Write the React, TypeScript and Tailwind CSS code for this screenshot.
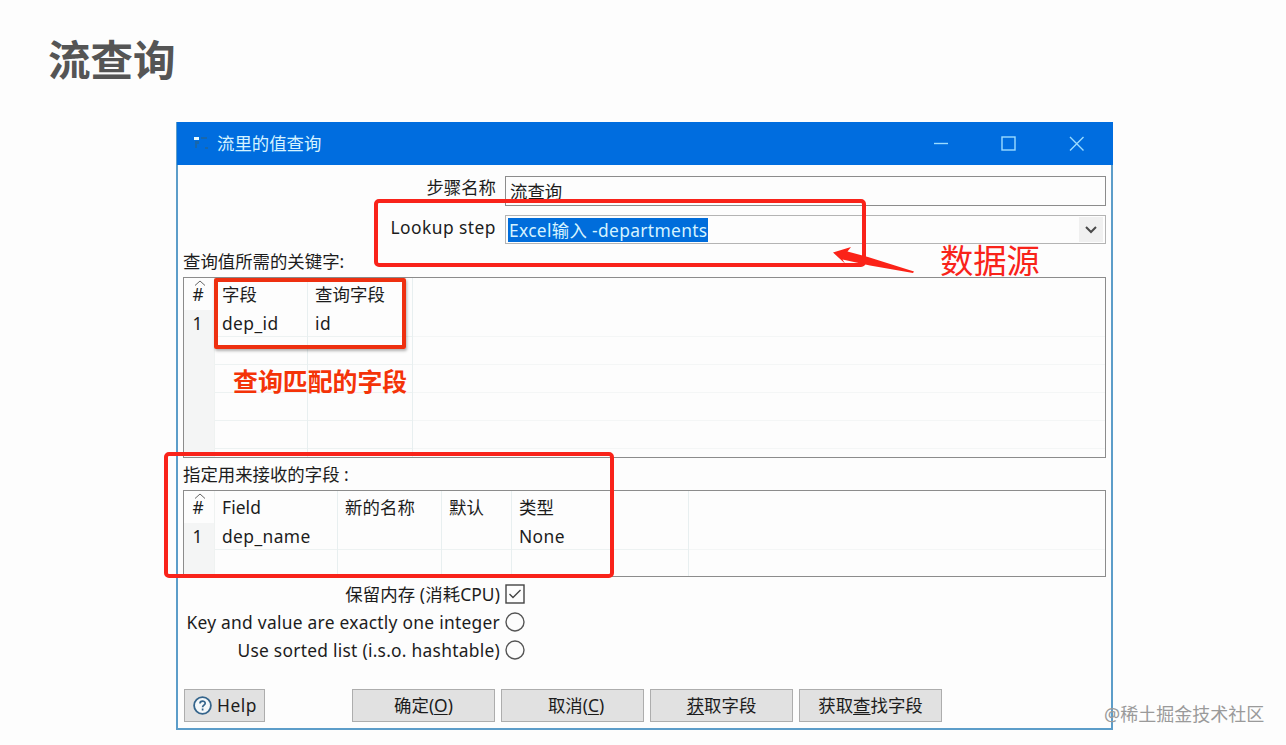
import type { ReactNode } from 'react';

interface Column {
  title: string;
  value: string;
  width: string;
}

const keyColumns: Column[] = [
  { title: '字段', value: 'dep_id', width: 'w-[93px]' },
  { title: '查询字段', value: 'id', width: 'w-[105px]' },
];

const valueColumns: Column[] = [
  { title: 'Field', value: 'dep_name', width: 'w-[123px]' },
  { title: '新的名称', value: '', width: 'w-[104px]' },
  { title: '默认', value: '', width: 'w-[70px]' },
  { title: '类型', value: 'None', width: 'w-[177px]' },
];

function GridTable({ columns, blankRows, className }: { columns: Column[]; blankRows: number; className: string }) {
  return (
    <div className={`flex w-[923px] overflow-hidden border border-[#8c8c8c] ${className}`}>
      <div className="relative w-[31px] shrink-0 border-r border-[#eff2f1] bg-[linear-gradient(#fdfdfd_32px,#f4f5f5_32px)] text-center">
        <svg className="absolute top-[2px] left-[10px] h-[6px] w-[12px]" viewBox="0 0 12 6" fill="none" stroke="#666" strokeWidth="1">
          <path d="M1 5.5L6 1L11 5.5" />
        </svg>
        <div className="h-[30px] pt-[3px] pr-[2px] leading-[27px]">#</div>
        <div className="h-[29px] pr-[3px] leading-[31px]">1</div>
      </div>
      {columns.map((col) => (
        <div key={col.title} className={`shrink-0 border-r border-[#e8eff0] ${col.width}`}>
          <div className="h-[30px] pt-[3px] pl-[7px] leading-[27px] tracking-[0.1px]">{col.title}</div>
          <div className="h-[29px] border-b border-[#edf2f2] pl-[7px] leading-[31px] tracking-[0.4px]">{col.value}</div>
          {Array.from({ length: blankRows }, (_, i) => (
            <div key={i} className="h-[28px] border-b border-[#edf2f2]" />
          ))}
        </div>
      ))}
      <div className="flex-1">
        <div className="h-[59px] border-b border-[#f4f6f6]" />
        {Array.from({ length: blankRows }, (_, i) => (
          <div key={i} className="h-[28px] border-b border-[#f4f6f6]" />
        ))}
      </div>
    </div>
  );
}

function DialogButton({ children }: { children: ReactNode }) {
  return (
    <button className="h-[33px] w-[143px] border border-[#adadad] bg-[#e1e1e1] leading-[31px] underline-offset-2">{children}</button>
  );
}

export default function App() {
  return (
    <div className="relative h-[745px] w-[1286px] overflow-hidden bg-[#fdfdfd] font-['Noto_Sans','Noto_Sans_CJK_SC',sans-serif] text-[17.4px] text-[#1c1c1c]">
      <h1 className="h-[122px] pt-[29px] pl-[48px] text-[42.5px] leading-[62px] font-bold text-[#555]">流查询</h1>

      <div className="ml-[176px] h-[608px] w-[937px] border-x-2 border-b-2 border-[#5c9dc9]">
        <div className="-mr-[2px] -ml-px flex h-[43px] items-center bg-[#006ddf] text-[#d5f3ff]">
          <svg className="ml-[16px] h-[18px] w-[18px]" viewBox="0 0 18 18">
            <rect x="1" y="2" width="5" height="3" fill="#e8fbff" />
            <path d="M2 6h4v3H4v4H2zM8 2h6v2H8zM12 12h3v2h-3z" fill="#1767ad" />
          </svg>
          <span className="ml-[6px] flex-1">流里的值查询</span>
          <svg className="mr-[28px] mb-[2px] h-[16px] w-[152px]" viewBox="0 0 152 16" fill="none" stroke="#9bdcff" strokeWidth="1.4">
            <path d="M1 8.500H15" />
            <rect x="69" y="2" width="13" height="13" />
            <path d="M137 2L150.500 15.500M150.500 2L137 15.500" />
          </svg>
        </div>

        <div className="flex h-[50px] pt-[11px]">
          <span className="w-[318px] text-right leading-[23px]">步骤名称</span>
          <div className="ml-[9px] h-[30px] w-[601px] border border-[#8c8c8c] pl-[4px] leading-[29px]">流查询</div>
        </div>
        <div className="flex h-[34px]">
          <span className="w-[318px] text-right leading-[25px] tracking-[0.45px]">Lookup step</span>
          <div className="ml-[9px] flex h-[29px] w-[601px] items-center justify-between border border-[#b4b4b4] px-[2px]">
            <span className="h-[24px] w-[200px] bg-[#006ddb] pl-[1px] leading-[24px] tracking-[0.33px] whitespace-nowrap text-[#d5f3ff]">Excel输入 -departments</span>
            <div className="flex h-[25px] w-[24px] items-center justify-center bg-[#f0f0f0]">
              <svg className="h-[8px] w-[12px]" viewBox="0 0 12 8" fill="none" stroke="#4a4a4a" strokeWidth="2">
                <path d="M1 1L6 6L11 1" />
              </svg>
            </div>
          </div>
        </div>

        <div className="h-[28px] pl-[5px] leading-[24px]">查询值所需的关键字:</div>
        <GridTable columns={keyColumns} blankRows={4} className="ml-[5px] h-[181px]" />
        <div className="h-[32px] pl-[5px] leading-[33px]">指定用来接收的字段 :</div>
        <GridTable columns={valueColumns} blankRows={0} className="ml-[5px] h-[87px]" />

        <div className="mt-[3px] w-[347px]">
          <div className="flex h-[28px] items-center justify-end gap-[5px]">
            <span className="tracking-[0.1px]">保留内存 (消耗CPU)</span>
            <svg className="h-[20px] w-[20px]" viewBox="0 0 20 20" fill="none" stroke="#444" strokeWidth="1.4">
              <rect x="1" y="1" width="18" height="18" />
              <path d="M4.500 10L8 13.500L15.500 6" />
            </svg>
          </div>
          {['Key and value are exactly one integer', 'Use sorted list (i.s.o. hashtable)'].map((label) => (
            <div key={label} className="flex h-[28px] items-center justify-end gap-[5px] tracking-[0.26px] whitespace-nowrap">
              <span>{label}</span>
              <svg className="h-[20px] w-[20px] shrink-0" viewBox="0 0 20 20" fill="none" stroke="#555" strokeWidth="1.4">
                <circle cx="10" cy="10" r="9" />
              </svg>
            </div>
          ))}
        </div>

        <div className="mt-[25px] flex gap-[6px] pl-[6px]">
          <button className="mr-[81px] flex h-[33px] w-[81px] items-center border border-[#adadad] bg-[#e1e1e1] pl-[8px]">
            <svg className="h-[19px] w-[19px] shrink-0" viewBox="0 0 19 19" fill="none" stroke="#35658c">
              <circle cx="9.500" cy="9.500" r="8.400" fill="#f4f8fa" strokeWidth="1.8" />
              <path d="M7 7.500C7 4.200 12.200 4.400 12.200 7.200C12.200 9 9.600 9.200 9.600 11.200M9.600 12.600V14.400" strokeWidth="1.7" />
            </svg>
            <span className="ml-[5px] tracking-[0.5px]">Help</span>
          </button>
          <DialogButton>确定(<u>O</u>)</DialogButton>
          <DialogButton><span className="pl-[7px]">取消(<u>C</u>)</span></DialogButton>
          <DialogButton><u>获</u>取字段</DialogButton>
          <DialogButton>获取<u>查</u>找字段</DialogButton>
        </div>
      </div>

      {/* red annotations on top of the dialog */}
      <div className="absolute top-[199px] left-[374px] h-[68px] w-[492px] rounded-[5px] border-4 border-[#f9231a]" />
      <div className="absolute top-[278px] left-[214px] h-[71px] w-[192px] rounded-[2px] border-4 border-[#ee3010] shadow-[1px_2px_3px_rgba(0,0,0,0.3)]" />
      <div className="absolute top-[452px] left-[164px] h-[126px] w-[450px] rounded-[5px] border-4 border-[#f9231a]" />
      <svg className="absolute top-[245px] left-[832px] h-[30px] w-[84px]" viewBox="0 0 84 30" fill="#fb2318">
        <path d="M1 7.500L19 2L15.500 6.500L36 12L82 26.500L81 28L38 20.500L10.500 14.500L13 18.500Z" />
      </svg>
      <span className="absolute top-[237px] left-[940px] text-[33.3px] leading-[46px] whitespace-nowrap text-[#f9231a]">数据源</span>
      <span className="absolute top-[363px] left-[233px] text-[24.9px] leading-[36px] font-bold whitespace-nowrap text-[#f43308]">查询匹配的字段</span>
      <span className="absolute top-[700px] left-[1104px] text-[18px] leading-[28px] whitespace-nowrap text-[#9a9a9a]">@稀土掘金技术社区</span>
    </div>
  );
}
